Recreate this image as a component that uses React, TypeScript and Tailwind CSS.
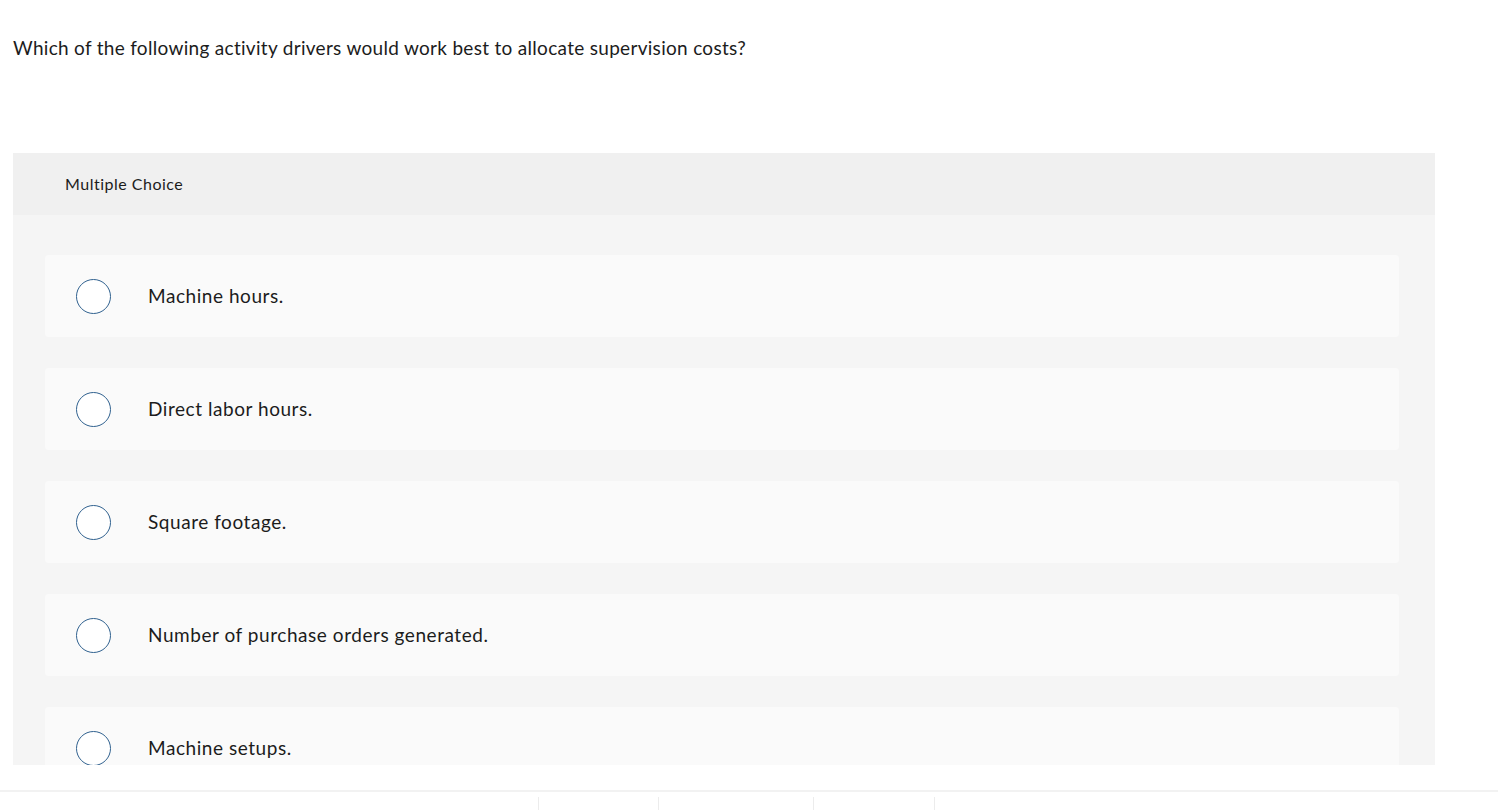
import React from "react";

const options = [
  "Machine hours.",
  "Direct labor hours.",
  "Square footage.",
  "Number of purchase orders generated.",
  "Machine setups.",
];

export default function App() {
  return (
    <div className="w-[1498px] h-[810px] bg-white overflow-hidden flex flex-col text-[#1c1c1c]" style={{ fontFamily: "Lato, 'Open Sans', sans-serif" }}>
      <div className="h-[765px] overflow-hidden">
        <div className="pl-[13px] pt-[36px] text-[19px] leading-[24px] tracking-[0.3px]">
          Which of the following activity drivers would work best to allocate supervision costs?
        </div>
        <div className="mt-[93px] ml-[13px] w-[1422px] rounded-t-[3px] bg-[#f5f5f5]">
          <div className="h-[62px] bg-[#f0f0f0] flex items-center pl-[52px] text-[16px] tracking-[0.5px]">
            Multiple Choice
          </div>
          <div className="pl-[32px] pr-[36px] pt-[40px] flex flex-col gap-[31px]">
            {options.map((o) => (
              <div key={o} className="h-[82px] bg-[#fafafa] rounded-[4px] flex items-center">
                <div className="ml-[31px] w-[35px] h-[35px] rounded-full border-[1.75px] border-[#30618f] bg-white shrink-0" />
                <div className="ml-[37px] text-[19px] tracking-[0.55px]">{o}</div>
              </div>
            ))}
          </div>
        </div>
      </div>
      <div className="mt-[25px] border-t-2 border-[#f2f2f2] flex-1 relative">
        <div className="flex h-full pt-[5px]">
          <div className="w-[538px]" />
          <div className="w-[120px] border-l border-[#ececec]" />
          <div className="w-[155px] border-l border-[#ececec]" />
          <div className="w-[121px] border-l border-[#ececec]" />
          <div className="flex-1 border-l border-[#ececec]" />
        </div>
      </div>
    </div>
  );
}
